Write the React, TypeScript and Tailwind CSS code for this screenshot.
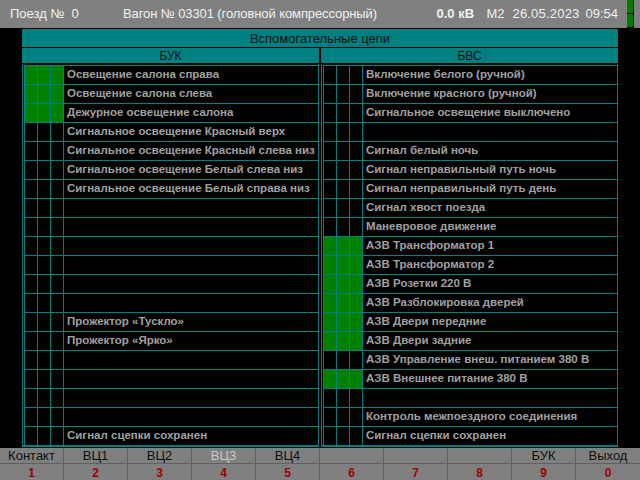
import React from "react";

type R = { on: boolean; label: string };

const left: R[] = [
  { on: true, label: "Освещение салона справа" },
  { on: true, label: "Освещение салона слева" },
  { on: true, label: "Дежурное освещение салона" },
  { on: false, label: "Сигнальное освещение Красный верх" },
  { on: false, label: "Сигнальное освещение Красный слева низ" },
  { on: false, label: "Сигнальное освещение Белый слева низ" },
  { on: false, label: "Сигнальное освещение Белый справа низ" },
  { on: false, label: "" },
  { on: false, label: "" },
  { on: false, label: "" },
  { on: false, label: "" },
  { on: false, label: "" },
  { on: false, label: "" },
  { on: false, label: "Прожектор «Тускло»" },
  { on: false, label: "Прожектор «Ярко»" },
  { on: false, label: "" },
  { on: false, label: "" },
  { on: false, label: "" },
  { on: false, label: "" },
  { on: false, label: "Сигнал сцепки сохранен" },
];

const right: R[] = [
  { on: false, label: "Включение белого (ручной)" },
  { on: false, label: "Включение красного (ручной)" },
  { on: false, label: "Сигнальное освещение выключено" },
  { on: false, label: "" },
  { on: false, label: "Сигнал белый ночь" },
  { on: false, label: "Сигнал неправильный путь ночь" },
  { on: false, label: "Сигнал неправильный путь день" },
  { on: false, label: "Сигнал хвост поезда" },
  { on: false, label: "Маневровое движение" },
  { on: true, label: "АЗВ Трансформатор 1" },
  { on: true, label: "АЗВ Трансформатор 2" },
  { on: true, label: "АЗВ Розетки 220 В" },
  { on: true, label: "АЗВ Разблокировка дверей" },
  { on: true, label: "АЗВ Двери передние" },
  { on: true, label: "АЗВ Двери задние" },
  { on: false, label: "АЗВ Управление внеш. питанием 380 В" },
  { on: true, label: "АЗВ Внешнее питание 380 В" },
  { on: false, label: "" },
  { on: false, label: "Контроль межпоездного соединения" },
  { on: false, label: "Сигнал сцепки сохранен" },
];

function Row({ r }: { r: R }) {
  return (
    <div className="flex h-[18px] gap-[1px]">
      {[0, 1, 2].map((i) => (
        <div key={i} className={r.on ? "w-[12px] bg-[#008000]" : "w-[12px] bg-black"} />
      ))}
      <div className="flex-1 bg-black flex items-center pl-[3px] text-[11.5px] font-bold text-[#a0a0a0] whitespace-nowrap overflow-hidden leading-none">
        {r.label}
      </div>
    </div>
  );
}

function Half({ title, rows }: { title: string; rows: R[] }) {
  return (
    <div className="w-[297px] flex flex-col bg-[#008080]">
      <div className="h-[15px] flex items-center justify-center text-[12px] text-[#101010] leading-none">{title}</div>
      <div className="h-[1px] bg-black" />
      <div className="pl-[1px] pr-[1px] pb-[2px]">
        <div className="bg-black pl-[1px] pt-[1px]">
          <div className="bg-[#008080] flex flex-col gap-[1px] pl-[1px] pt-[1px]">
            {rows.map((r, i) => (
              <Row key={i} r={r} />
            ))}
          </div>
        </div>
      </div>
    </div>
  );
}

const keys = [
  { t: "Контакт", n: "1" },
  { t: "ВЦ1", n: "2" },
  { t: "ВЦ2", n: "3" },
  { t: "ВЦ3", n: "4", dim: true },
  { t: "ВЦ4", n: "5" },
  { t: "", n: "6" },
  { t: "", n: "7" },
  { t: "", n: "8" },
  { t: "БУК", n: "9" },
  { t: "Выход", n: "0" },
];

export default function App() {
  return (
    <div className="w-[640px] h-[480px] bg-black overflow-hidden flex flex-col font-['Liberation_Sans',Arial,sans-serif]">
      <div className="flex h-[28px] shrink-0">
        <div className="w-[627px] bg-[#808080] flex items-center text-[13px] text-[#f0f0f0] whitespace-nowrap">
          <span className="ml-[10px] w-[113px]">Поезд №&nbsp;&nbsp;0</span>
          <span className="tracking-[-0.1px]">Вагон № 03301 (головной компрессорный)</span>
          <span className="ml-auto w-[50px] font-bold">0.0 кВ</span>
          <span className="w-[26px]">М2</span>
          <span className="w-[73px] tracking-[0.2px]">26.05.2023</span>
          <span className="mr-[9px]">09:54</span>
        </div>
        <div className="w-[6px] flex flex-col gap-[1px]">
          <div className="h-[13px] bg-[#008000]" />
          <div className="h-[13px] bg-[#008000]" />
        </div>
        <div className="w-[1px]" />
        <div className="w-[6px] bg-[#808080]" />
      </div>
      <div className="h-[1px] shrink-0" />
      <div className="ml-[22px] w-[596px] flex flex-col shrink-0">
        <div className="h-[18px] bg-[#008080] flex items-center justify-center text-[13px] text-[#101010] leading-none">
          Вспомогательные цепи
        </div>
        <div className="h-[1px] bg-black" />
        <div className="flex gap-[2px]">
          <Half title="БУК" rows={left} />
          <Half title="БВС" rows={right} />
        </div>
      </div>
      <div className="flex-1" />
      <div className="h-[32px] bg-[#808080] grid grid-cols-10 shrink-0">
        {keys.map((k, i) => (
          <div key={i} className={i < 9 ? "flex flex-col border-r border-[#606060]" : "flex flex-col"}>
            <div className={k.dim ? "h-[16px] flex items-center justify-center text-[13px] text-[#c8c8c8] border-b border-[#606060]" : "h-[16px] flex items-center justify-center text-[13px] text-[#101010] border-b border-[#606060]"}>
              {k.t}
            </div>
            <div className="flex-1 flex items-center justify-center text-[12px] font-bold text-[#a00000]">{k.n}</div>
          </div>
        ))}
      </div>
    </div>
  );
}
